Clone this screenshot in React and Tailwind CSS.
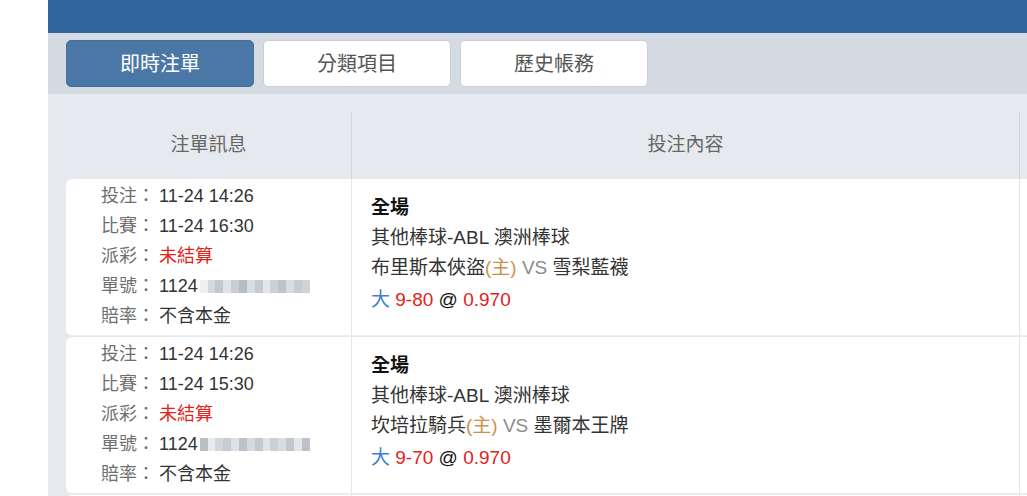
import React from "react";

const Mosaic = ({ variant }) => {
  const a = [
    "bg-[#eef0f2]", "bg-[#d5d9de]", "bg-[#c3c8cf]", "bg-[#dfe2e6]", "bg-[#c9cdd3]", "bg-[#b7bdc5]",
    "bg-[#d9dce0]", "bg-[#c5cad0]", "bg-[#e4e6e9]", "bg-[#cdd1d6]", "bg-[#bfc4cb]", "bg-[#d8dbdf]",
    "bg-[#c7ccd2]", "bg-[#d0d4d9]",
  ];
  const b = [
    "bg-[#b9bec5]", "bg-[#e8eaed]", "bg-[#d3d7dc]", "bg-[#c8ccd2]", "bg-[#dde0e4]", "bg-[#bcc2c9]",
    "bg-[#d6d9de]", "bg-[#c4c9cf]", "bg-[#e1e4e7]", "bg-[#cbd0d5]", "bg-[#d9dce0]", "bg-[#c2c7cd]",
    "bg-[#e3e5e8]", "bg-[#bdc2c9]",
  ];
  const cells = variant === 1 ? a : b;
  return (
    <span className="inline-flex h-[13px] w-[110px] align-[-1px] ml-[2px]">
      {cells.map((c, i) => (
        <span key={i} className={"flex-1 h-full " + c} />
      ))}
    </span>
  );
};

const InfoLine = ({ label, children }) => (
  <div className="flex items-center h-[30px]">
    <span className="w-[58px] shrink-0 text-[#6f6f6f]">{label}</span>
    <span className="text-[#333333]">{children}</span>
  </div>
);

const Row = ({ bet, match, ticketVariant, home, away, line }) => (
  <div className="flex bg-white rounded-l-[6px] border-b border-[#eceef1] h-[157px]">
    <div className="w-[285px] shrink-0 pl-[35px] pt-[2px] text-[18px]">
      <InfoLine label="投注：">{bet}</InfoLine>
      <InfoLine label="比賽：">{match}</InfoLine>
      <InfoLine label="派彩："><span className="text-[#e2231a]">未結算</span></InfoLine>
      <InfoLine label="單號：">
        <span className="inline-flex items-center">1124<Mosaic variant={ticketVariant} /></span>
      </InfoLine>
      <InfoLine label="賠率：">不含本金</InfoLine>
    </div>
    <div className="w-[668px] shrink-0 border-l border-[#e3e6ea] pl-[19px] pt-[14px] text-[19px] text-[#333333] leading-[30px]">
      <div className="font-bold text-[#111111]">全場</div>
      <div>其他棒球-ABL 澳洲棒球</div>
      <div>
        {home}
        <span className="text-[#c9924a]">(主)</span>
        <span className="text-[#8a8a8a]"> VS </span>
        {away}
      </div>
      <div className="pt-[2px]">
        <span className="text-[#3d7fd4]">大</span>{" "}
        <span className="text-[#e2231a]">{line}</span>{" "}
        <span className="text-[#111111]">@</span>{" "}
        <span className="text-[#e2231a]">0.970</span>
      </div>
    </div>
    <div className="flex-1 border-l border-[#e3e6ea]" />
  </div>
);

export default function App() {
  return (
    <div className="w-[1027px] h-[496px] overflow-hidden bg-white font-['Liberation_Sans','Noto_Sans_CJK_TC',sans-serif]">
      <div className="ml-[48px] h-full flex flex-col">
        <div className="h-[33px] bg-[#31669e] shrink-0" />
        <div className="h-[61px] bg-[#d4dbe3] shrink-0 pl-[18px] pt-[7px] flex gap-[9px]">
          <div className="w-[188px] h-[47px] rounded-[5px] bg-[#4b77a7] border border-[#45709f] flex items-center justify-center text-[20px] text-white">
            即時注單
          </div>
          <div className="w-[188px] h-[47px] rounded-[5px] bg-white border border-[#c9d0d8] flex items-center justify-center text-[20px] text-[#555555]">
            分類項目
          </div>
          <div className="w-[188px] h-[47px] rounded-[5px] bg-white border border-[#c9d0d8] flex items-center justify-center text-[20px] text-[#555555]">
            歷史帳務
          </div>
        </div>
        <div className="flex-1 bg-[#e6e9ee] pl-[18px] pt-[18px]">
          <div className="flex h-[67px] text-[19px] text-[#666666]">
            <div className="w-[285px] shrink-0 flex items-center justify-center pb-[1px]">注單訊息</div>
            <div className="w-[668px] shrink-0 border-l border-[#d4d8de] flex items-center justify-center pb-[1px]">投注內容</div>
            <div className="flex-1 border-l border-[#d4d8de]" />
          </div>
          <Row
            bet="11-24 14:26"
            match="11-24 16:30"
            ticketVariant={1}
            home="布里斯本俠盜"
            away="雪梨藍襪"
            line="9-80"
          />
          <div className="h-px" />
          <Row
            bet="11-24 14:26"
            match="11-24 15:30"
            ticketVariant={2}
            home="坎培拉騎兵"
            away="墨爾本王牌"
            line="9-70"
          />
          <div className="h-px" />
          <div className="flex bg-white rounded-l-[6px] h-[40px]">
            <div className="w-[285px] shrink-0" />
            <div className="w-[668px] shrink-0 border-l border-[#e3e6ea]" />
            <div className="flex-1 border-l border-[#e3e6ea]" />
          </div>
        </div>
      </div>
    </div>
  );
}
